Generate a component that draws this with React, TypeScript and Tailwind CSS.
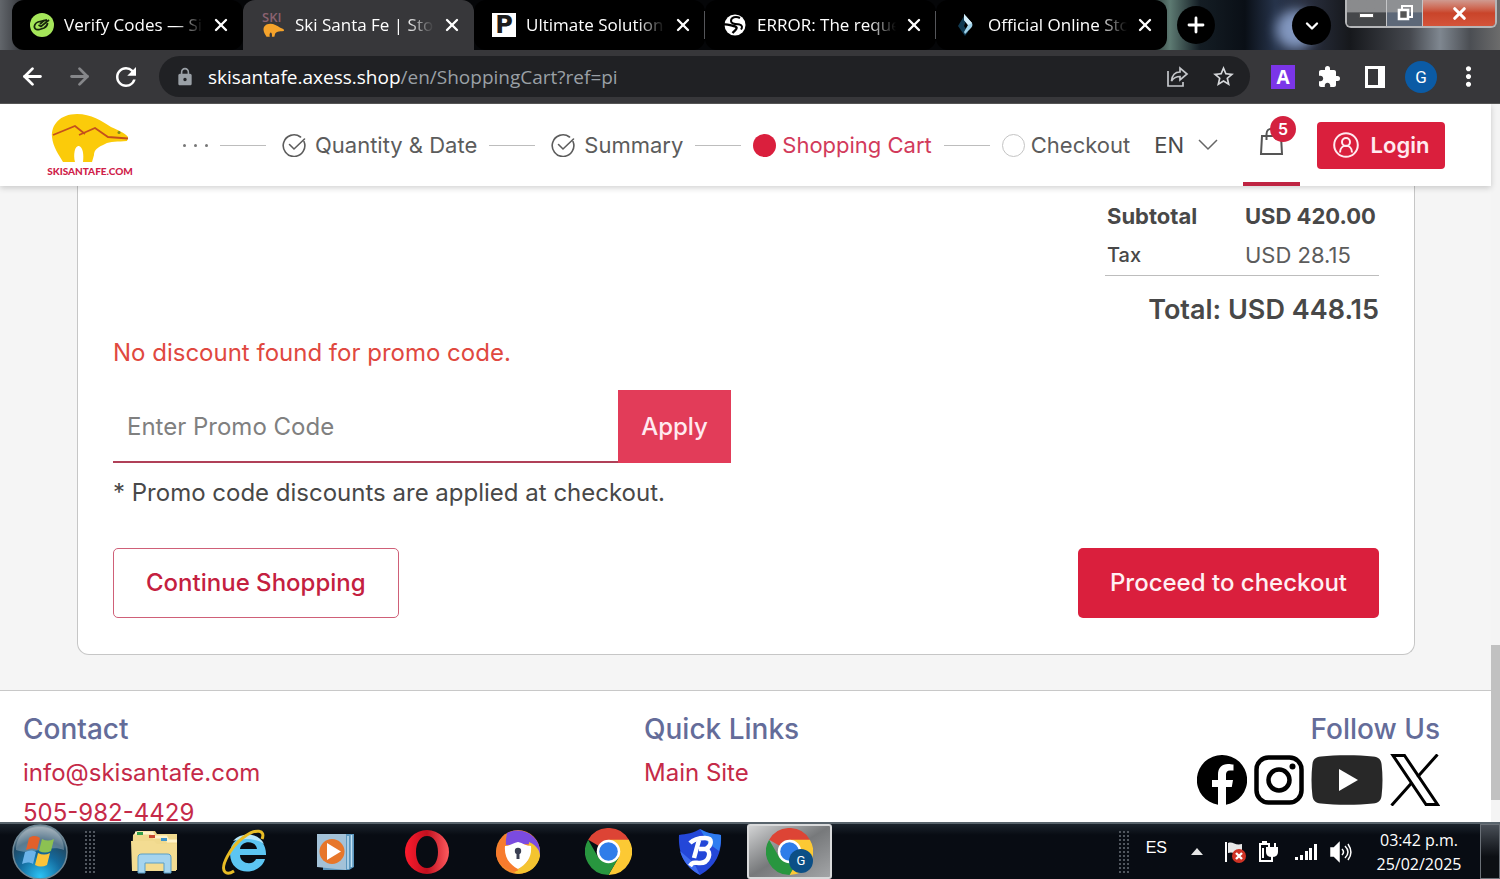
import React from "react";
import { ArrowLeft, ArrowRight, ChevronDown, Plus, X } from "lucide-react";
import { MdExtension, MdLock, MdMoreVert, MdRefresh, MdStarBorder } from "react-icons/md";

const uiFont = "font-['Open_Sans','Noto_Sans',sans-serif]";
const siteFont = "font-['Inter','Liberation_Sans',sans-serif]";

/* ---------- Browser tabs ---------- */

function VerifyIcon() {
    return (
        <svg viewBox="0 0 24 24" className="size-6">
            <circle cx="12" cy="12" r="12" fill="#a5e65a" />
            <path d="M14 7.500 8 9c-3 1-4 4-3.500 5.500.5 2 3 2.500 5 2l4.500-1.500c2-1 3.500-3 3.500-5" fill="none" stroke="#16240c" strokeWidth="1.800" />
            <path d="m8.500 12 2.500 1.500L19 7M10 11l4-3.500 3-.5" fill="none" stroke="#16240c" strokeWidth="1.800" />
        </svg>
    );
}

const bearPath =
    "M2 24C1 12 10 1 27 1c14 0 25 7 34 13 8 4 13 5 17 10l-1 4c-9 1-17 0-22 3-7 3-11 6-11 11l-2 7h-9c1-7 0-15-4-16s-6 8-4 16H13C9 42 3 34 2 24Z";

function SkiIcon() {
    return (
        <svg viewBox="0 0 24 26" className="h-[26px] w-6">
            <text x="1" y="10" fontSize="13" fontWeight="600" fill="#8b6270" fontFamily="Open Sans, sans-serif">SKI</text>
            <g transform="translate(2 11.500) scale(.27)">
                <path d={bearPath} fill="#f5a32b" />
            </g>
        </svg>
    );
}

function PIcon() {
    return (
        <span className="flex size-6 items-center justify-center bg-white font-['DejaVu_Sans',sans-serif] text-[24px] font-bold leading-6 text-[#1c1c1c]">
            P
        </span>
    );
}

function GlobeIcon() {
    return (
        <svg viewBox="0 0 22 22" className="size-[22px]">
            <circle cx="11" cy="11" r="10.500" fill="#fff" />
            <path d="M16 4c-4-2-9-1-9 3 0 3 4 3 8.500 3.500 3 .5 3 3 1.500 5" fill="none" stroke="#000" strokeWidth="2" />
            <path d="M0 10.500c4-.5 6 1 9.500 1.500 3 .5 4 2 2 4L8.500 19" fill="none" stroke="#000" strokeWidth="2.400" />
        </svg>
    );
}

function DiamondIcon() {
    return (
        <svg viewBox="0 0 20 24" className="h-6 w-5">
            <path d="M8 3 2 13l7 10 3-4-4-6 2-5Z" fill="#103a52" />
            <path d="m8 1 8 9c1 2 0 4-1 5l-6 6-1-2 4-7-4-5Z" fill="#9fd3ea" />
            <path d="m8 1 8 9-4 2-4-5Z" fill="#d4eefa" />
        </svg>
    );
}

const tabs = [
    { title: "Verify Codes — Si", icon: <VerifyIcon />, active: false },
    { title: "Ski Santa Fe | Stor", icon: <SkiIcon />, active: true },
    { title: "Ultimate Solution", icon: <PIcon />, active: false },
    { title: "ERROR: The reque", icon: <GlobeIcon />, active: false },
    { title: "Official Online Sto", icon: <DiamondIcon />, active: false },
];

function TabStrip() {
    return (
        <div className="flex h-[50px] shrink-0 bg-[linear-gradient(90deg,#62666b_0,#4a4d52_12px,#050608_40px,#050608_76%,#5d7a72_78%,#141d24_80%,#0a0f16_83%,#26334a_85%,#2a3040_87%,#16181c_90%,#45484e_94%,#7f8790_96%,#4b4e53_98%,#6c6c6c_100%)] pl-3">
            <div className="flex min-w-0 flex-1">
                {tabs.map((tab, i) => (
                    <div
                        key={tab.title}
                        className={
                            tab.active
                                ? "flex w-[231px] items-center rounded-t-xl bg-[#37373a] pl-[18px] pr-3"
                                : "flex w-[231px] items-center rounded-xl bg-black pl-[18px] pr-3"
                        }
                    >
                        <a href="#tab" className="flex min-w-0 flex-1 items-center gap-[10px] text-white">
                            <span className="flex w-6 shrink-0 justify-center">{tab.icon}</span>
                            <span className="flex-1 overflow-hidden whitespace-nowrap text-[17px] leading-6 [mask-image:linear-gradient(90deg,#000_80%,transparent)]">
                                {tab.title}
                            </span>
                        </a>
                        <button aria-label="Close tab" className="ml-2 text-white">
                            <X size={20} strokeWidth={2.8} />
                        </button>
                        {(i === 2 || i === 3) && <span className="-mr-3 ml-[11px] h-7 w-px bg-[#55565a]" />}
                    </div>
                ))}
                <button aria-label="New tab" className="ml-[10px] mt-[6px] flex size-[38px] items-center justify-center rounded-full bg-black text-white">
                    <Plus size={24} strokeWidth={2.8} />
                </button>
            </div>
            <button aria-label="Search tabs" className="mr-[14px] mt-[6px] flex size-[39px] items-center justify-center rounded-full bg-black text-white shadow-[-16px_4px_12px_#8398c0]">
                <ChevronDown size={20} strokeWidth={2.8} />
            </button>
            <div className="mr-[3px] flex h-7 overflow-hidden rounded-b-md border-2 border-t-0 border-[#b5b6b8]">
                <button aria-label="Minimize" className="flex w-10 items-center justify-center border-r border-[#c5c6c8] bg-linear-to-b from-[#8a8b8d] from-45% to-[#45474a] to-50%">
                    <span className="mt-1 h-[5px] w-[15px] border border-[#555] bg-white" />
                </button>
                <button aria-label="Restore" className="flex w-9 items-center justify-center border-r border-[#c5c6c8] bg-linear-to-b from-[#8e9093] from-45% to-[#5d6878] to-50%">
                    <svg viewBox="0 0 18 18" className="size-[18px]">
                        <path d="M6 5V2h10v11h-3" fill="none" stroke="#fff" strokeWidth="2" />
                        <path d="M3 6h9v9H3z" fill="#555" stroke="#fff" strokeWidth="2.600" />
                    </svg>
                </button>
                <button aria-label="Close window" className="flex w-[72px] items-center justify-center bg-linear-to-b from-[#cf9a90] via-[#c9442a] via-50% to-[#d4543a] text-white">
                    <X size={19} strokeWidth={4} />
                </button>
            </div>
        </div>
    );
}

/* ---------- Address bar ---------- */

function Toolbar() {
    return (
        <div className="flex h-[54px] shrink-0 items-center border-b border-[#555] bg-[#37373a] pl-[19px] pr-4 text-white">
            <button aria-label="Back"><ArrowLeft size={27} strokeWidth={2.5} /></button>
            <button aria-label="Forward" className="ml-5 text-[#86878a]"><ArrowRight size={27} strokeWidth={2.5} /></button>
            <button aria-label="Reload" className="ml-[18px]"><MdRefresh size={30} /></button>
            <div className="ml-[18px] flex h-[41px] flex-1 items-center rounded-full bg-[#202124] pl-4 pr-[14px] text-[#9aa0a6]">
                <MdLock size={20} />
                <p className="ml-[13px] flex-1 text-[19px] leading-7">
                    <span className="text-white">skisantafe.axess.shop</span>/en/ShoppingCart?ref=pi
                </p>
                <button aria-label="Share" className="text-[#c4c6ca]">
                    <svg viewBox="0 0 24 24" className="size-6" fill="none" stroke="currentColor" strokeWidth="1.700">
                        <path d="M3 6v15h15v-4" />
                        <path d="M15 3v4C9 7 7 11 6.500 16c2-3 4-4.500 8.500-4.500V15l7-6Z" />
                    </svg>
                </button>
                <button aria-label="Bookmark" className="ml-[22px] text-[#d5d7da]"><MdStarBorder size={25} /></button>
            </div>
            <button className="ml-[21px] size-6 bg-[#7b35e8] text-[19px] font-bold leading-6">A</button>
            <button aria-label="Extensions" className="ml-[22px]"><MdExtension size={24} /></button>
            <button aria-label="Side panel" className="ml-6 h-[22px] w-5 border-[3px] border-r-[7px] border-white" />
            <button className="ml-5 size-8 rounded-full bg-[#0b5ba5] font-['Roboto',sans-serif] text-[17px] leading-8">G</button>
            <button aria-label="Menu" className="ml-4"><MdMoreVert size={31} /></button>
        </div>
    );
}

/* ---------- Site header ---------- */

function CheckCircle() {
    return (
        <svg viewBox="0 0 24 24" className="size-6 shrink-0" fill="none" stroke="#5c5c5c" strokeWidth="1.600">
            <path d="M22 8.500A10.800 10.800 0 1 1 18.500 4" strokeLinecap="round" />
            <path d="m7.500 11.500 4.500 4.500L22.500 6" strokeLinecap="round" />
        </svg>
    );
}

function StepLine() {
    return <span className="mx-3 h-px flex-1 bg-[#bdbdbd]" />;
}

function SiteHeader() {
    return (
        <header className="relative z-10 flex h-[82px] shrink-0 items-center bg-white pl-[46px] pr-[46px] shadow-[0_2px_6px_rgba(0,0,0,0.18)]">
            <a href="#home" className="flex w-[88px] flex-col items-center">
                <svg viewBox="0 0 80 50" className="h-[50px] w-20">
                    <path d={bearPath} fill="#fbcb0a" />
                    <path d="m3 22 22-9 10 8 M29 22l16-7 13 9 20 1.500" fill="none" stroke="#c4501c" strokeWidth="1.800" />
                    <circle cx="69" cy="19.500" r="1.500" fill="#7c8a1e" />
                </svg>
                <span className="mt-px font-['Lato',sans-serif] text-[10px] font-black leading-[14px] text-[#cf2149]">SKISANTAFE.COM</span>
            </a>
            <nav className="ml-[49px] flex flex-1 items-center whitespace-nowrap text-[22px] leading-8 text-[#5c5c5c]">
                <span className="flex gap-2">
                    <i className="size-[3px] rounded-full bg-[#777]" />
                    <i className="size-[3px] rounded-full bg-[#777]" />
                    <i className="size-[3px] rounded-full bg-[#777]" />
                </span>
                <StepLine />
                <a href="#quantity" className="flex items-center gap-[9px] pl-1"><CheckCircle />Quantity &amp; Date</a>
                <StepLine />
                <a href="#summary" className="flex items-center gap-[9px] pl-1"><CheckCircle />Summary</a>
                <StepLine />
                <a href="#cart" className="flex items-center gap-[6px] text-[#d23a5b]">
                    <span className="size-[23px] rounded-full bg-[#da1f3d]" />Shopping Cart
                </a>
                <StepLine />
                <a href="#checkout" className="flex items-center gap-[6px]">
                    <span className="size-[23px] rounded-full border border-[#c4c4c4]" />Checkout
                </a>
            </nav>
            <button className="ml-6 flex items-center gap-[14px] text-[22px] leading-8 text-[#4a4a4a]">
                EN
                <svg viewBox="0 0 20 12" className="h-3 w-5" fill="none" stroke="#666" strokeWidth="1.500">
                    <path d="m1 1 9 9 9-9" />
                </svg>
            </button>
            <a href="#bag" aria-label="Shopping bag" className="relative ml-[25px] flex h-full w-[57px] items-center justify-center border-b-4 border-[#bf2442]">
                <svg viewBox="0 0 26 30" className="mb-[2px] h-[30px] w-[26px]" fill="none" stroke="#555" strokeWidth="2">
                    <path d="M3 9h19l1 18H2Z" />
                    <path d="M7.500 13V7c0-7 10-7 10 0v6" />
                </svg>
                <span className="absolute right-1 top-3 size-[26px] rounded-full bg-[#d4213f] text-center text-[16px] font-semibold leading-[26px] text-white">5</span>
            </a>
            <button className="ml-[17px] flex h-[47px] w-32 items-center justify-center gap-3 rounded-[4px] bg-[#da1f3d] text-[22px] font-semibold text-[#ffeaf0]">
                <svg viewBox="0 0 26 26" className="size-[26px]" fill="none" stroke="currentColor" strokeWidth="2">
                    <circle cx="13" cy="13" r="11.800" />
                    <circle cx="13" cy="10" r="4" />
                    <path d="M7 20.500c0-9 12-9 12 0" />
                </svg>
                Login
            </button>
        </header>
    );
}

/* ---------- Cart ---------- */

function Cart() {
    return (
        <main className="bg-[#f5f5f5] pb-[35px] pl-[77px] pr-[76px] text-[#484848]">
            <section className="rounded-b-xl border border-t-0 border-[#c6c6c6] bg-white px-[35px] pb-9 pt-[11px]">
                <div className="flex flex-col items-end">
                    <table className="w-[274px] border-b border-[#bdbdbd] text-left text-[22px] leading-[39px]">
                        <tbody>
                            <tr className="font-bold">
                                <th scope="row" className="w-[140px] pl-[2px]">Subtotal</th>
                                <td className="whitespace-nowrap">USD 420.00</td>
                            </tr>
                            <tr>
                                <th scope="row" className="pl-[2px] text-[20px] font-medium">Tax</th>
                                <td className="text-[#5c5c5c]">USD 28.15</td>
                            </tr>
                        </tbody>
                    </table>
                    <p className="mt-4 text-[27px] font-semibold leading-9">Total: USD 448.15</p>
                </div>
                <p className="mt-[7px] text-[24px] leading-9 text-[#e0483f]">No discount found for promo code.</p>
                <form className="mt-[19px] flex h-[73px] w-[618px]" onSubmit={(e) => e.preventDefault()}>
                    <input
                        aria-label="Promo code"
                        type="text"
                        placeholder="Enter Promo Code"
                        className="min-w-0 flex-1 border-b-2 border-[#b04058] px-[14px] pt-[2px] text-[24px] outline-none placeholder:text-[#808080]"
                    />
                    <button className="w-[113px] bg-[#e23c59] text-[24px] font-medium text-[#ffeaf0]">Apply</button>
                </form>
                <p className="mt-3 text-[24px] leading-9">* Promo code discounts are applied at checkout.</p>
                <div className="mt-[37px] flex justify-between text-[24px] font-medium">
                    <button className="h-[70px] rounded-[5px] border border-[#cf6078] px-8 text-[#c4203f]">Continue Shopping</button>
                    <button className="h-[70px] rounded-[5px] bg-[#da1f3d] px-8 text-[#fff0f3]">Proceed to checkout</button>
                </div>
            </section>
        </main>
    );
}

/* ---------- Footer ---------- */

function Footer() {
    return (
        <footer className="grid flex-1 grid-cols-[621px_1fr_auto] border-t border-[#c8c8c8] bg-white pl-[23px] pr-[51px] pt-5 text-[24px] leading-10 text-[#c52a48]">
            <div className="flex flex-col items-start">
                <h2 className="mb-[6px] text-[28px] font-medium leading-9 text-[#646c99]">Contact</h2>
                <a href="mailto:info@skisantafe.com">info@skisantafe.com</a>
                <a href="tel:505-982-4429">505-982-4429</a>
            </div>
            <div className="flex flex-col items-start">
                <h2 className="mb-[6px] text-[28px] font-medium leading-9 text-[#646c99]">Quick Links</h2>
                <a href="#main">Main Site</a>
            </div>
            <div className="flex flex-col items-end">
                <h2 className="mb-[7px] text-[28px] font-medium leading-9 text-[#646c99]">Follow Us</h2>
                <div className="flex items-center gap-[7px]">
                    <a href="#facebook" aria-label="Facebook">
                        <svg viewBox="0 0 50 50" className="size-[50px]">
                            <path d="M25 0a25 25 0 0 0-4 49.700V32h-6v-7h6v-5.500C21 13 25 9 31 9c2 0 4 .3 5.500.6v6H33c-3 0-4 1.800-4 4V25h7l-1.200 7H29v17.700A25 25 0 0 0 25 0Z" fill="#000" />
                        </svg>
                    </a>
                    <a href="#instagram" aria-label="Instagram">
                        <svg viewBox="0 0 50 50" className="size-[50px]" fill="none" stroke="#000">
                            <rect x="2.500" y="2.500" width="45" height="45" rx="12" strokeWidth="4.500" />
                            <circle cx="25" cy="25" r="10.500" strokeWidth="4.500" />
                            <circle cx="38.500" cy="11.500" r="3" fill="#000" stroke="none" />
                        </svg>
                    </a>
                    <a href="#youtube" aria-label="YouTube">
                        <svg viewBox="0 0 72 50" className="h-[50px] w-[72px]">
                            <path d="M10 1.500C25-.3 47-.3 62 1.500c6 .7 8 3 8.600 8 1.200 10 1.200 21 0 31-.6 5-2.600 7.300-8.600 8-15 1.800-37 1.800-52 0-6-.7-8-3-8.600-8-1.200-10-1.200-21 0-31 .6-5 2.600-7.300 8.600-8Z" fill="#282828" />
                            <path d="m28 14 19 11-19 11Z" fill="#fff" />
                        </svg>
                    </a>
                    <a href="#x" aria-label="X">
                        <svg viewBox="0 0 50 52" className="h-[52px] w-[50px]" fill="none" stroke="#000" strokeWidth="3">
                            <path d="M3 1.500h11.500l33 49H36Z" />
                            <path d="M47.500.5 27.500 23M22 28.500 1.500 51.500" />
                        </svg>
                    </a>
                </div>
            </div>
        </footer>
    );
}

/* ---------- Taskbar ---------- */

function StartOrb() {
    return (
        <svg viewBox="0 0 56 56" className="size-14">
            <defs>
                <radialGradient id="orb" cx=".5" cy=".95" r=".9">
                    <stop offset="0" stopColor="#2cc3f5" />
                    <stop offset=".45" stopColor="#146a9d" />
                    <stop offset=".75" stopColor="#1f4a66" />
                    <stop offset="1" stopColor="#8d9da8" />
                </radialGradient>
            </defs>
            <circle cx="28" cy="28" r="27" fill="url(#orb)" stroke="#6f8896" strokeWidth="1.500" />
            <path d="M4 26C4 10 16 3 28 3s24 7 24 23C38 20 20 32 4 26Z" fill="#c8d4dc" opacity=".35" />
            <path d="M17 14c4-3 8-2 11 0l-3 12c-3-2-7-2-11 0Z" fill="#e2602b" />
            <path d="M30 15c4 2 8 2 12 0l-3 12c-4 2-8 2-12 0Z" fill="#8cc152" />
            <path d="M13 28c4-2 8-2 11 0l-3 12c-3-2-7-2-11 0Z" fill="#6cb4ea" />
            <path d="M26 29c4 2 8 2 12 0l-3 12c-4 2-8 2-12 0Z" fill="#fbc43a" />
        </svg>
    );
}

function ExplorerIcon() {
    return (
        <svg viewBox="0 0 50 46" className="h-[46px] w-[50px]">
            <path d="M4 6 8 2h18l2 3h20v36H3Z" fill="#f0d98d" />
            <path d="M6 4h17l2 4h12l2 4h9" fill="none" stroke="#fff3c9" strokeWidth="3" />
            <path d="M2 12h23l3 3h20l-1 27H3Z" fill="#f3dc92" />
            <path d="M8 3h6v3H8z" fill="#31a04a" />
            <path d="M20 6h6v3h-6z" fill="#c8492f" />
            <path d="M32 9h6v3h-6z" fill="#3f95cc" />
            <path d="M9 44V29c0-3 1-4 4-4h25c3 0 4 1 4 4v15h-7V34H16v10Z" fill="#a5d4ee" stroke="#5b9fc6" />
        </svg>
    );
}

function IeIcon() {
    return (
        <svg viewBox="0 0 46 46" className="size-[46px]">
            <path d="M44 26H18c0 9 13 11 16 4h9c-4 16-34 19-35-5C8 1 45 1 44 26ZM18 20h17c-1-9-16-9-17 0Z" fill="#5cc5f2" />
            <path d="M11 12c9-10 26-8 31 3-8-6-22-6-31-3Z" fill="#b5e6fb" />
            <path d="M40 10C44 1 34-1 22 8 8 18-2 38 3 43c2 2 6 1 9-1" fill="none" stroke="#e8bc25" strokeWidth="3" />
        </svg>
    );
}

function PlayerIcon() {
    return (
        <svg viewBox="0 0 40 38" className="h-[38px] w-10">
            <path d="M7 1h31v33l-5 3H7Z" fill="#5c97be" />
            <path d="M32 3v33M35.500 2v32" stroke="#c4e2f3" strokeWidth="1.500" />
            <path d="M1 1h29v36l-29-3Z" fill="#a3c2d8" />
            <circle cx="16" cy="18.500" r="12.500" fill="#e7772b" />
            <path d="m11 10 14 8.500L11 27Z" fill="#fff" />
        </svg>
    );
}

function OperaIcon() {
    return (
        <svg viewBox="0 0 44 44" className="size-11">
            <defs>
                <linearGradient id="opera" x1="0" x2="1">
                    <stop offset="0" stopColor="#ff1b2d" />
                    <stop offset=".5" stopColor="#c0101f" />
                    <stop offset="1" stopColor="#ff5a5e" />
                </linearGradient>
            </defs>
            <path d="M22 0a22 22 0 1 0 0 44 22 22 0 0 0 0-44Zm0 6c7 0 11 7 11 16s-4 16-11 16-11-7-11-16S15 6 22 6Z" fill="url(#opera)" fillRule="evenodd" />
        </svg>
    );
}

function PrivacyIcon() {
    return (
        <svg viewBox="0 0 44 44" className="size-11">
            <circle cx="22" cy="22" r="22" fill="#f58a2c" />
            <path d="M11 3c16-8 35 4 33 22L33 14 9 15Z" fill="#7b4be0" />
            <path d="M33 12c9 4 11 10 11 14-2 12-14 20-26 17l14-12Z" fill="#f4c430" />
            <path d="M0 24c1-8 4-15 9-20l2 22 11 15C9 41 1 33 0 24Z" fill="#f77b2d" />
            <path d="M9 16c5 0 8-3 13-4 5 1 8 4 13 4 1 11-4 18-13 23-9-5-14-12-13-23Z" fill="#fff" />
            <circle cx="22" cy="21" r="3.200" fill="#3a3f52" />
            <path d="M20.500 22h3v7h-3z" fill="#3a3f52" />
        </svg>
    );
}

function ChromeIcon() {
    return (
        <svg viewBox="0 0 48 48" className="size-[47px]">
            <path d="M24 24 3.200 12A24 24 0 0 1 44.800 12Z" fill="#dd4435" />
            <path d="M24 12h20.800A24 24 0 0 1 24 48l10.400-18Z" fill="#fcc934" />
            <path d="M13.600 30 3.200 12A24 24 0 0 0 24 48l10.400-18Z" fill="#28963f" />
            <circle cx="24" cy="24" r="12" fill="#fff" />
            <circle cx="24" cy="24" r="9.500" fill="#2f7de9" />
        </svg>
    );
}

function ShieldIcon() {
    return (
        <svg viewBox="0 0 44 46" className="h-[46px] w-11">
            <path d="M22 0c6 4 14 5 21 6 1 18-5 31-21 40C6 37 0 24 1 6c7-1 15-2 21-6Z" fill="#2447d8" />
            <path d="M22 0c6 4 14 5 21 6 0 5 0 10-2 16L30 14Z" fill="#2f7df0" />
            <path d="M2 22 16 34l6 12C11 40 5 32 2 22Z" fill="#3f6cf0" />
            <path d="M12 14c4-4 10-5 15-5 8 0 7 7 1 11 6 3 3 14-6 14-5 0-7-2-10 3" fill="none" stroke="#fff" strokeWidth="4.500" />
            <path d="m21 11-5 18M21 20l7 0" fill="none" stroke="#fff" strokeWidth="4.500" />
        </svg>
    );
}

const pinned = [
    { name: "File Explorer", icon: <ExplorerIcon /> },
    { name: "Internet Explorer", icon: <IeIcon /> },
    { name: "Media Player", icon: <PlayerIcon /> },
    { name: "Opera", icon: <OperaIcon /> },
    { name: "Private Browser", icon: <PrivacyIcon /> },
    { name: "Chrome", icon: <ChromeIcon /> },
    { name: "Shield", icon: <ShieldIcon /> },
];

function Grip() {
    return <span className="h-11 w-3 shrink-0 bg-[radial-gradient(#50565e_1px,transparent_1px)] bg-[size:4px_4px]" />;
}

function Taskbar() {
    return (
        <footer className="flex h-[57px] shrink-0 items-center border-t-2 border-[#59646c] bg-linear-to-b from-[#1c242d] to-[#080c13] to-20% text-white">
            <button aria-label="Start" className="ml-3 mr-4"><StartOrb /></button>
            <Grip />
            <div className="ml-3 flex h-full flex-1 items-center">
                {pinned.map((app) => (
                    <button key={app.name} aria-label={app.name} className="flex w-[91px] justify-center">
                        {app.icon}
                    </button>
                ))}
                <button aria-label="Chrome, open window" className="relative ml-[2px] flex h-[55px] w-[85px] items-center justify-center rounded-[3px] border-2 border-[#d9dadb] bg-linear-to-br from-[#d2d3d4] via-[#77797b] to-[#a3a5a7]">
                    <ChromeIcon />
                    <span className="absolute bottom-1 right-[17px] size-6 rounded-full bg-[#0c4f86] font-['Roboto',sans-serif] text-[13px] leading-6">G</span>
                </button>
            </div>
            <Grip />
            <button className="mb-2 ml-4 font-['Liberation_Sans',sans-serif] text-[16px] leading-6">ES</button>
            <div className="ml-6 mr-[6px] flex items-center">
                <svg viewBox="0 0 12 7" className="h-[7px] w-3"><path d="m6 0 6 7H0Z" fill="#e6e6e6" /></svg>
                <svg viewBox="0 0 24 24" className="ml-5 size-6">
                    <path d="M3 2v20" stroke="#fff" strokeWidth="2" />
                    <path d="M5 3c5-2 7 3 14 1v9c-6 2-9-2-14 0Z" fill="#e8e8e8" />
                    <circle cx="16" cy="16" r="7" fill="#cf3325" />
                    <path d="m13 13 6 6m0-6-6 6" stroke="#fff" strokeWidth="2.400" />
                </svg>
                <svg viewBox="0 0 22 24" className="ml-[10px] h-6 w-[22px]" fill="none" stroke="#fff" strokeWidth="2">
                    <path d="M11 4H3v17h12v-4M5 2h5" />
                    <path d="M10 8h10v4c0 3-2 4-5 4s-5-1-5-4Z" fill="#fff" />
                    <path d="M12 8V3m6 5V3m-3 13v6M6 8v10" />
                </svg>
                <svg viewBox="0 0 22 18" className="ml-4 h-[18px] w-[22px]" fill="#fff">
                    <path d="M0 14h3v3H0zM5 12h3v5H5zM10 8h3v9h-3zM14 5h3v12h-3zM19 1h3v16h-3z" />
                </svg>
                <svg viewBox="0 0 22 22" className="ml-[13px] size-[22px]" fill="none" stroke="#fff" strokeWidth="1.500">
                    <path d="M1 7h3l5-5v18l-5-5H1Z" fill="#fff" />
                    <path d="M12 8c2 2 2 4 0 6m3-9c4 4 4 8 0 12m3-14c4 6 4 11 0 16" />
                </svg>
            </div>
            <div className="w-[122px] text-center text-[16px] leading-6">
                <p>03:42 p.m.</p>
                <p>25/02/2025</p>
            </div>
            <button aria-label="Show desktop" className="h-full w-5 border border-[#6a7077] bg-linear-to-b from-[#4a5058] to-[#0c0f14] to-60%" />
        </footer>
    );
}

export default function App() {
    return (
        <div className={`flex h-screen flex-col overflow-hidden bg-white ${uiFont}`}>
            <TabStrip />
            <Toolbar />
            <div className={`flex min-h-0 flex-1 overflow-hidden ${siteFont}`}>
                <div className="flex min-w-0 flex-1 flex-col">
                    <SiteHeader />
                    <Cart />
                    <Footer />
                </div>
                <div className="flex w-[9px] flex-col justify-end bg-[#f4f4f4] pb-[22px]">
                    <div className="h-[155px] bg-[#c1c1c1]" />
                </div>
            </div>
            <Taskbar />
        </div>
    );
}
